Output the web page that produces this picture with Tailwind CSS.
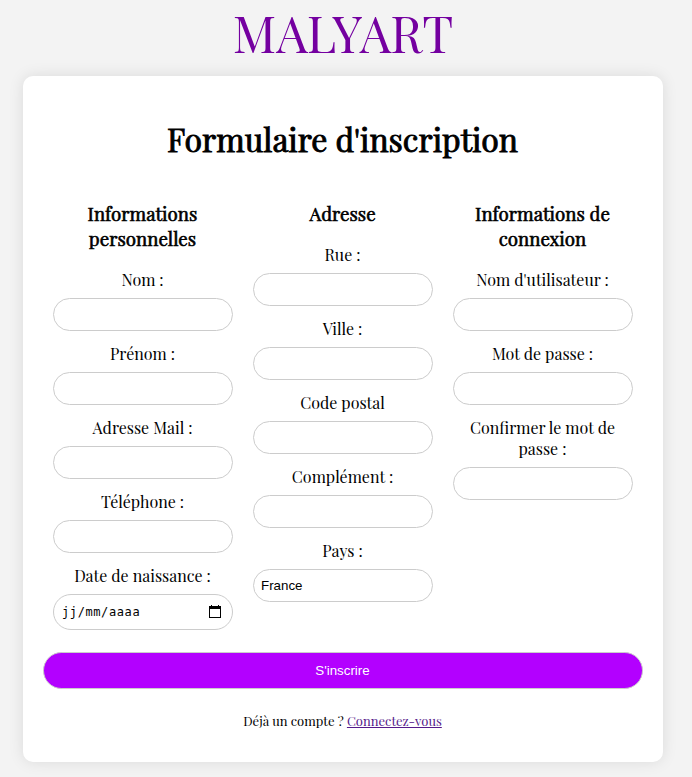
<!DOCTYPE html>
<html lang="fr">
<head>
<meta charset="utf-8">
<title>Malyart - Inscription</title>
<script src="https://cdn.jsdelivr.net/npm/@tailwindcss/browser@4"></script>
</head>
<body class="h-[777px] overflow-hidden bg-[#f3f3f3] text-black font-['Playfair_Display','Liberation_Serif',serif]">
<header class="h-[76px] w-[686px] text-center text-[50px] leading-[66px] text-[#7400a0]">MALYART</header>
<main class="ml-[23px] h-[686px] w-[640px] rounded-[10px] bg-white px-5 pt-[41px] text-center shadow-[0_0_15px_rgba(0,0,0,0.1)]">
  <h1 class="h-[43px] pr-px text-[32px] leading-[43px] whitespace-nowrap [-webkit-text-stroke:0.9px_black]">Formulaire d'inscription</h1>
  <form>
    <div class="mt-[41px] grid h-[451px] grid-cols-3 gap-5 px-[10px] text-[16px] leading-[21px] whitespace-nowrap">
      <section>
        <h2 class="mb-[18px] pr-px text-[18.72px] leading-[25px] [-webkit-text-stroke:0.6px_black]">Informations<br>personnelles</h2>
        <label class="block pr-px" for="nom">Nom :</label>
        <input id="nom" class="mt-[8px] mb-[12px] block h-[33px] w-full rounded-full border border-[#ccc] bg-white">
        <label class="block pr-px" for="prenom">Prénom :</label>
        <input id="prenom" class="mt-[8px] mb-[12px] block h-[33px] w-full rounded-full border border-[#ccc] bg-white">
        <label class="block pr-px" for="mail">Adresse Mail :</label>
        <input id="mail" class="mt-[8px] mb-[12px] block h-[33px] w-full rounded-full border border-[#ccc] bg-white">
        <label class="block pr-px" for="tel">Téléphone :</label>
        <input id="tel" class="mt-[8px] mb-[12px] block h-[33px] w-full rounded-full border border-[#ccc] bg-white">
        <label class="block pr-px">Date de naissance :</label>
        <div class="mt-[8px] flex h-[36px] items-center justify-between rounded-full border border-[#ccc] pr-[11px] pl-2 font-['DejaVu_Sans_Mono',monospace] text-[12px] tracking-[0.6px]">
          <span>jj/mm/aaaa</span>
          <svg class="mb-0.5 h-[13px] w-[12px]" viewBox="0 0 12 13" shape-rendering="crispEdges"><path d="M0 1h2V0h1v1h6V0h1v1h2v12H0zM1 4v8h10V4z" fill="#000" fill-rule="evenodd"/></svg>
        </div>
      </section>
      <section>
        <h2 class="mb-[18px] pr-px text-[18.72px] leading-[25px] [-webkit-text-stroke:0.6px_black]">Adresse</h2>
        <label class="block pr-px" for="rue">Rue :</label>
        <input id="rue" class="mt-[8px] mb-[12px] block h-[33px] w-full rounded-full border border-[#ccc] bg-white">
        <label class="block pr-px" for="ville">Ville :</label>
        <input id="ville" class="mt-[8px] mb-[12px] block h-[33px] w-full rounded-full border border-[#ccc] bg-white">
        <label class="block pr-px" for="cp">Code postal</label>
        <input id="cp" class="mt-[8px] mb-[12px] block h-[33px] w-full rounded-full border border-[#ccc] bg-white">
        <label class="block pr-px" for="comp">Complément :</label>
        <input id="comp" class="mt-[8px] mb-[12px] block h-[33px] w-full rounded-full border border-[#ccc] bg-white">
        <label class="block pr-px" for="pays">Pays :</label>
        <input id="pays" value="France" class="mt-[8px] block h-[33px] w-full rounded-full border border-[#ccc] bg-white px-[7px] font-['Liberation_Sans',sans-serif] text-[13.333px]">
      </section>
      <section>
        <h2 class="mb-[18px] pr-px text-[18.72px] leading-[25px] [-webkit-text-stroke:0.6px_black]">Informations de<br>connexion</h2>
        <label class="block pr-px" for="user">Nom d'utilisateur :</label>
        <input id="user" class="mt-[8px] mb-[12px] block h-[33px] w-full rounded-full border border-[#ccc] bg-white">
        <label class="block pr-px" for="mdp">Mot de passe :</label>
        <input id="mdp" type="password" class="mt-[8px] mb-[12px] block h-[33px] w-full rounded-full border border-[#ccc] bg-white">
        <label class="block pr-px" for="mdp2">Confirmer le mot de<br>passe :</label>
        <input id="mdp2" type="password" class="mt-[8px] block h-[33px] w-full rounded-full border border-[#ccc] bg-white">
      </section>
    </div>
    <button type="submit" class="block h-[37px] w-full rounded-full border border-[#ccc] bg-[#b300ff] pr-px font-['Liberation_Sans',sans-serif] text-[13.333px] text-white">S'inscrire</button>
  </form>
  <p class="mt-[23px] pr-px text-[13px] leading-[18px] whitespace-nowrap">Déjà un compte ? <a href="#" class="text-[#551a8b] underline">Connectez-vous</a></p>
</main>
</body>
</html>
